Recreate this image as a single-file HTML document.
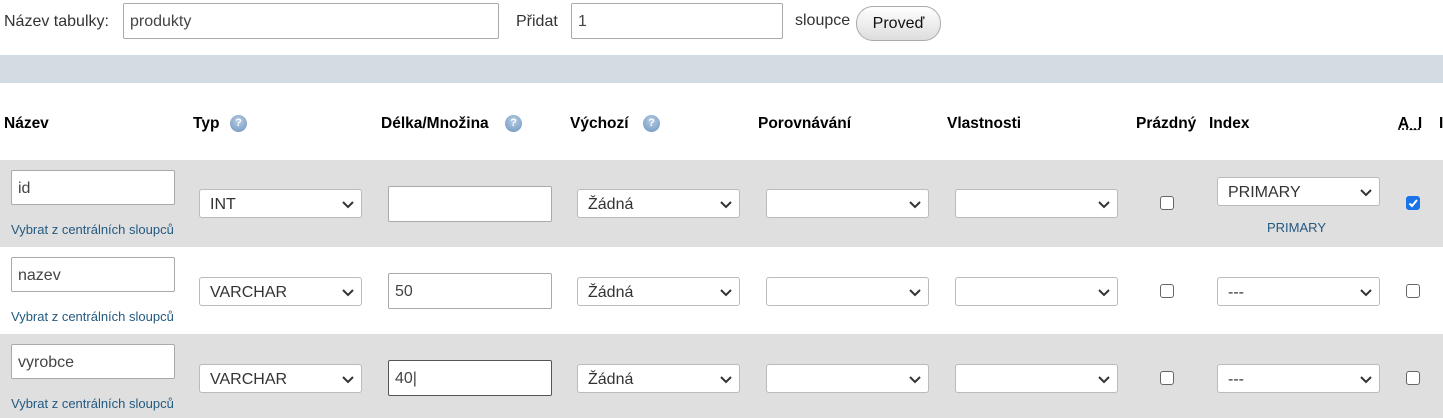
<!DOCTYPE html>
<html><head><meta charset="utf-8"><style>
*{box-sizing:border-box;margin:0;padding:0}
body{width:1443px;height:418px;overflow:hidden;background:#fff;font-family:"Liberation Sans",Arial,sans-serif;position:relative;color:#333}
.a{position:absolute}
.t{font-size:16px;color:#333}
.inp{position:absolute;background:#fff;border:1px solid #aaa;border-radius:2px;font-size:16px;padding-left:6px;padding-top:2px;display:flex;align-items:center;color:#444}
.sel{position:absolute;background:#fff;border:1px solid #bbb;border-radius:3px;font-size:16px;padding-left:10px;padding-top:2px;display:flex;align-items:center;color:#333;height:29px;width:163px}
.sel svg{position:absolute;right:7px;top:11px}
.h{position:absolute;top:115px;font-weight:bold;font-size:15.5px;color:#000}
.q{position:absolute;top:115px;width:17px;height:17px;border-radius:50%;background:radial-gradient(circle at 50% 35%,#b8cde3,#6c93bf);color:#fff;font-size:11px;font-weight:bold;text-align:center;line-height:17px}
.row{position:absolute;left:0;width:1443px;height:87px}
.lnk{position:absolute;left:11px;font-size:13px;color:#235a81}
.cb{position:absolute;width:14px;height:14px;border:1px solid #666;border-radius:3px;background:#fff}
</style></head><body>
<div class="a t" style="left:4px;top:13px">Název tabulky:</div>
<div class="inp" style="left:123px;top:3px;width:376px;height:36px">produkty</div>
<div class="a t" style="left:516px;top:13px">Přidat</div>
<div class="inp" style="left:571px;top:3px;width:212px;height:36px">1</div>
<div class="a t" style="left:795px;top:12px">sloupce</div>
<div class="a" style="left:856px;top:6px;width:85px;height:35px;border:1px solid #aaa;border-radius:17px;background:linear-gradient(#fff,#ddd);font-size:16px;color:#111;text-align:center;line-height:33px">Proveď</div>
<div class="a" style="left:0;top:55px;width:1443px;height:28px;background:#d4dce3"></div>

<div class="h" style="left:4px">Název</div>
<div class="h" style="left:193px">Typ</div><div class="q" style="left:230px">?</div>
<div class="h" style="left:381px">Délka/Množina</div><div class="q" style="left:505px">?</div>
<div class="h" style="left:570px">Výchozí</div><div class="q" style="left:643px">?</div>
<div class="h" style="left:758px">Porovnávání</div>
<div class="h" style="left:947px">Vlastnosti</div>
<div class="h" style="left:1136px">Prázdný</div>
<div class="h" style="left:1209px">Index</div>
<div class="h" style="left:1398px;text-decoration:underline dotted">A_I</div>
<div class="h" style="left:1439px">I</div>

<div class="row" style="top:160px;background:#dfdfdf"></div>
<div class="row" style="top:334px;background:#dfdfdf;height:84px"></div>

<!-- row 1 -->
<div class="inp" style="left:11px;top:170px;width:164px;height:35px">id</div>
<div class="lnk" style="top:222px">Vybrat z centrálních sloupců</div>
<div class="sel" style="left:199px;top:189px">INT<svg width="12" height="8"><path d="M1 1l5 5 5-5" stroke="#333" stroke-width="2" fill="none"/></svg></div>
<div class="inp" style="left:388px;top:186px;width:164px;height:36px"></div>
<div class="sel" style="left:577px;top:189px">Žádná<svg width="12" height="8"><path d="M1 1l5 5 5-5" stroke="#333" stroke-width="2" fill="none"/></svg></div>
<div class="sel" style="left:766px;top:189px"><svg width="12" height="8"><path d="M1 1l5 5 5-5" stroke="#333" stroke-width="2" fill="none"/></svg></div>
<div class="sel" style="left:955px;top:189px"><svg width="12" height="8"><path d="M1 1l5 5 5-5" stroke="#333" stroke-width="2" fill="none"/></svg></div>
<div class="cb" style="left:1160px;top:196px"></div>
<div class="sel" style="left:1217px;top:177px">PRIMARY<svg width="12" height="8"><path d="M1 1l5 5 5-5" stroke="#333" stroke-width="2" fill="none"/></svg></div>
<div class="a" style="left:1267px;top:220px;font-size:13px;color:#235a81">PRIMARY</div>
<div class="cb" style="left:1406px;top:196px;background:#1a73e8;border-color:#1a73e8"><svg width="12" height="12" style="position:absolute;left:0;top:0"><path d="M2.5 6.5l2.5 2.5 5-6" stroke="#fff" stroke-width="2" fill="none"/></svg></div>

<!-- row 2 -->
<div class="inp" style="left:11px;top:257px;width:164px;height:35px">nazev</div>
<div class="lnk" style="top:309px">Vybrat z centrálních sloupců</div>
<div class="sel" style="left:199px;top:277px">VARCHAR<svg width="12" height="8"><path d="M1 1l5 5 5-5" stroke="#333" stroke-width="2" fill="none"/></svg></div>
<div class="inp" style="left:388px;top:273px;width:164px;height:36px">50</div>
<div class="sel" style="left:577px;top:277px">Žádná<svg width="12" height="8"><path d="M1 1l5 5 5-5" stroke="#333" stroke-width="2" fill="none"/></svg></div>
<div class="sel" style="left:766px;top:277px"><svg width="12" height="8"><path d="M1 1l5 5 5-5" stroke="#333" stroke-width="2" fill="none"/></svg></div>
<div class="sel" style="left:955px;top:277px"><svg width="12" height="8"><path d="M1 1l5 5 5-5" stroke="#333" stroke-width="2" fill="none"/></svg></div>
<div class="cb" style="left:1160px;top:284px"></div>
<div class="sel" style="left:1217px;top:277px">---<svg width="12" height="8"><path d="M1 1l5 5 5-5" stroke="#333" stroke-width="2" fill="none"/></svg></div>
<div class="cb" style="left:1406px;top:284px"></div>

<!-- row 3 -->
<div class="inp" style="left:11px;top:344px;width:164px;height:35px">vyrobce</div>
<div class="lnk" style="top:396px">Vybrat z centrálních sloupců</div>
<div class="sel" style="left:199px;top:364px">VARCHAR<svg width="12" height="8"><path d="M1 1l5 5 5-5" stroke="#333" stroke-width="2" fill="none"/></svg></div>
<div class="inp" style="left:388px;top:360px;width:164px;height:36px;border-color:#555">40|</div>
<div class="sel" style="left:577px;top:364px">Žádná<svg width="12" height="8"><path d="M1 1l5 5 5-5" stroke="#333" stroke-width="2" fill="none"/></svg></div>
<div class="sel" style="left:766px;top:364px"><svg width="12" height="8"><path d="M1 1l5 5 5-5" stroke="#333" stroke-width="2" fill="none"/></svg></div>
<div class="sel" style="left:955px;top:364px"><svg width="12" height="8"><path d="M1 1l5 5 5-5" stroke="#333" stroke-width="2" fill="none"/></svg></div>
<div class="cb" style="left:1160px;top:371px"></div>
<div class="sel" style="left:1217px;top:364px">---<svg width="12" height="8"><path d="M1 1l5 5 5-5" stroke="#333" stroke-width="2" fill="none"/></svg></div>
<div class="cb" style="left:1406px;top:371px"></div>
</body></html>
